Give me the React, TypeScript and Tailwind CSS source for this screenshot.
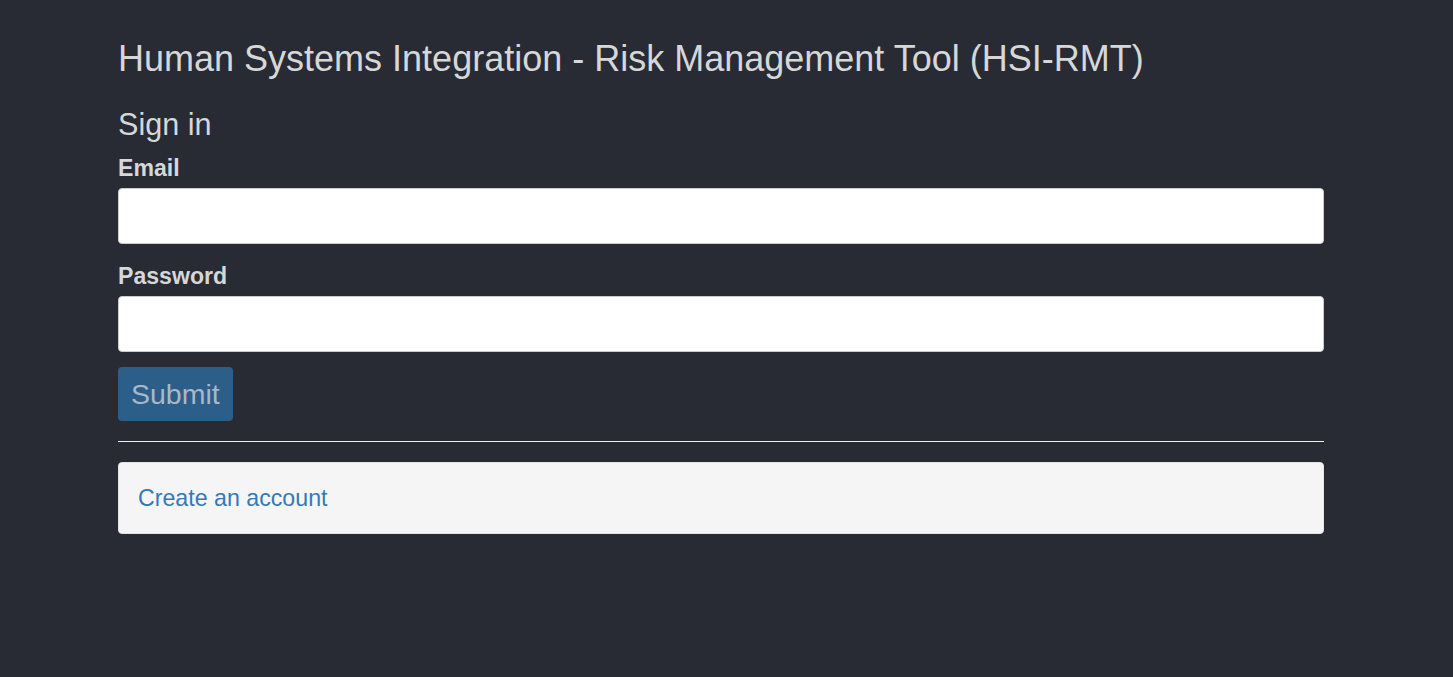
export default function App() {
  return (
    <div
      className="min-h-screen bg-[#282b33] text-[#d6d7d9]"
      style={{ fontFamily: '"Liberation Sans", Arial, sans-serif' }}
    >
      <div className="ml-[118px] w-[1206px] pt-[39px]">
        <h1 className="text-[36px] leading-[40px] font-normal">
          Human Systems Integration - Risk Management Tool (HSI-RMT)
        </h1>

        <h2 className="mt-[29px] text-[30.6px] leading-[33px] font-normal">Sign in</h2>

        <form onSubmit={(e) => e.preventDefault()}>
          <label className="mt-[15px] block text-[23.1px] leading-[24px] font-bold">Email</label>
          <input
            type="email"
            className="mt-[8px] block h-[56px] w-full rounded-[4px] border border-[#ccc] bg-white px-3 text-[22px] text-[#555] outline-none"
          />

          <label className="mt-[20px] block text-[23.1px] leading-[24px] font-bold">Password</label>
          <input
            type="password"
            className="mt-[8px] block h-[56px] w-full rounded-[4px] border border-[#ccc] bg-white px-3 text-[22px] text-[#555] outline-none"
          />

          <button
            type="submit"
            className="mt-[15px] block h-[54px] rounded-[4px] bg-[#2c5e8a] px-[13px] text-[28.5px] leading-[54px] text-[#a9b8c6]"
          >
            Submit
          </button>
        </form>

        <hr className="mt-[20px] border-0 border-t border-[#eeeeee]" />

        <div className="mt-[20px] flex h-[72px] items-center rounded-[4px] border border-[#e3e3e3] bg-[#f5f5f5] px-[19px]">
          <a href="#" className="text-[23.2px] text-[#337ab7]">
            Create an account
          </a>
        </div>
      </div>
    </div>
  )
}
